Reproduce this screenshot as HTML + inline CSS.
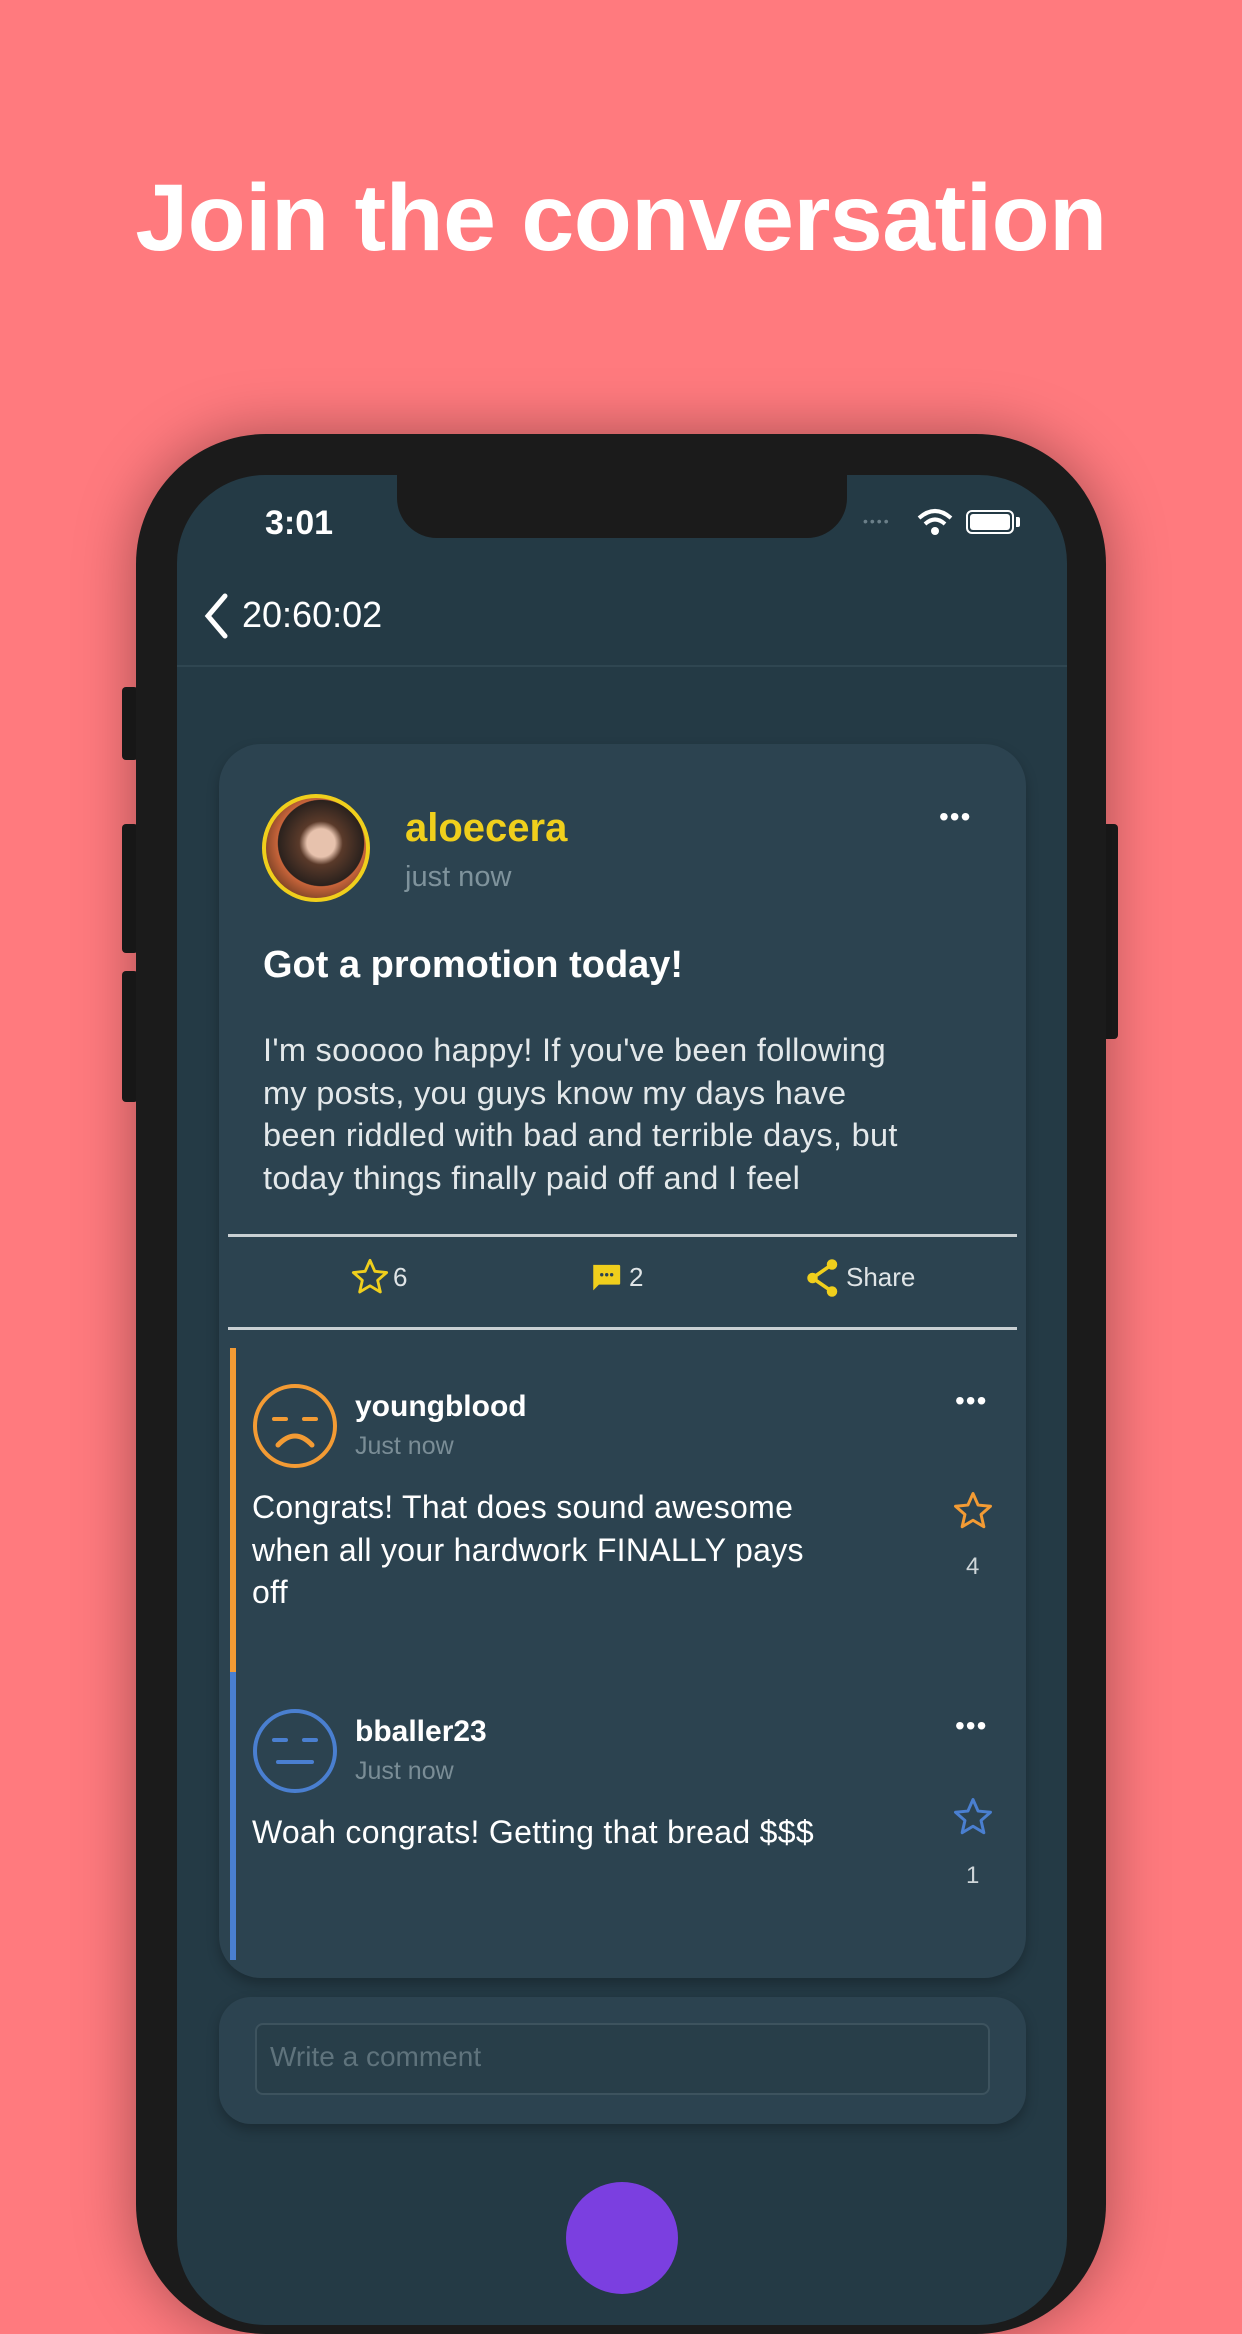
<!DOCTYPE html>
<html><head><meta charset="utf-8"><style>
*{margin:0;padding:0;box-sizing:border-box}
body{width:1242px;height:2208px;overflow:hidden;background:#ff7a7e;font-family:"Liberation Sans",Arial,sans-serif;position:relative}
.a{position:absolute}
.t{white-space:nowrap}
</style></head><body>
<div class="a t" style="left:0;width:1242px;top:158px;text-align:center;font-size:95px;font-weight:bold;color:#fff;line-height:120px;letter-spacing:-0.5px">Join the conversation</div>

<div class="a" style="left:122px;top:687px;width:16px;height:73px;background:#1c1c1c;border-radius:4px"></div>
<div class="a" style="left:122px;top:824px;width:16px;height:129px;background:#1c1c1c;border-radius:4px"></div>
<div class="a" style="left:122px;top:971px;width:16px;height:131px;background:#1c1c1c;border-radius:4px"></div>
<div class="a" style="left:1102px;top:824px;width:16px;height:215px;background:#1c1c1c;border-radius:4px"></div>

<div class="a" style="left:136px;top:434px;width:970px;height:1900px;background:#1b1b1b;border-radius:130px;box-shadow:0 0 60px rgba(0,0,0,0.35)"></div>
<div class="a" style="left:177px;top:475px;width:890px;height:1850px;background:#243a45;border-radius:88px;overflow:hidden">
  <div class="a" style="left:220px;top:-10px;width:450px;height:73px;background:#1b1b1b;border-radius:0 0 40px 40px"></div>
  <div class="a t" style="left:88px;top:28px;font-size:34px;font-weight:bold;color:#fff;line-height:40px">3:01</div>
  <div class="a t" style="left:686px;top:38px;font-size:14px;color:#6b7f89;letter-spacing:2px">••••</div>
  <svg class="a" style="left:740px;top:33px" width="36" height="28" viewBox="0 0 36 28"><path d="M2 10 Q18 -4 34 10" stroke="#fff" stroke-width="4" fill="none"/><path d="M8 16 Q18 7 28 16" stroke="#fff" stroke-width="4" fill="none"/><circle cx="18" cy="23" r="4" fill="#fff"/></svg>
  <div class="a" style="left:789px;top:35px;width:48px;height:24px;border:2px solid #fff;border-radius:6px;padding:2px"><div style="width:100%;height:100%;background:#fff;border-radius:3px"></div></div>
  <div class="a" style="left:839px;top:42px;width:4px;height:10px;background:#fff;border-radius:0 2px 2px 0"></div>
  <svg class="a" style="left:26px;top:118px" width="26" height="46" viewBox="0 0 26 46"><path d="M22 3 L5 23 L22 43" stroke="#fff" stroke-width="5" fill="none" stroke-linecap="round"/></svg>
  <div class="a t" style="left:65px;top:120px;font-size:36px;color:#fff;line-height:40px">20:60:02</div>
  <div class="a" style="left:0;top:190px;width:890px;height:2px;background:#2f4651"></div>

  <div class="a" style="left:42px;top:269px;width:807px;height:1234px;background:#2c4350;border-radius:42px;box-shadow:0 6px 12px rgba(0,0,0,0.25)">
    <div class="a" style="left:43px;top:50px;width:108px;height:108px;border-radius:50%;border:4px solid #f0cf1c;background:radial-gradient(circle at 55% 45%,#e7c2ad 0 18%,#5a3a2a 28%,#2a211d 55%,#c8643a 56%,#6b3b22 80%)"></div>
    <div class="a t" style="left:186px;top:60px;font-size:40px;font-weight:bold;color:#f0cf1c;line-height:48px">aloecera</div>
    <div class="a t" style="left:186px;top:116px;font-size:29px;color:#7f939c;line-height:34px">just now</div>
    <div class="a t" style="left:720px;top:56px;font-size:28px;color:#fff;letter-spacing:1px;line-height:34px">•••</div>
    <div class="a t" style="left:44px;top:198px;font-size:38px;font-weight:bold;color:#fff;line-height:46px">Got a promotion today!</div>
    <div class="a t" style="left:44px;top:285px;font-size:32.5px;color:#e3e8ea;line-height:42.5px;letter-spacing:0.3px">I'm sooooo happy! If you've been following<br>my posts, you guys know my days have<br>been riddled with bad and terrible days, but<br>today things finally paid off and I feel</div>
    <div class="a" style="left:9px;top:490px;width:789px;height:3px;background:#c9d0d3"></div>
    <svg class="a" style="left:131px;top:513px" width="40" height="40" viewBox="0 0 24 24"><path d="M12 2 L14.9 8.6 L22 9.3 L16.6 14 L18.2 21 L12 17.3 L5.8 21 L7.4 14 L2 9.3 L9.1 8.6 Z" fill="none" stroke="#f0cf1c" stroke-width="1.7" stroke-linejoin="round"/></svg>
    <div class="a t" style="left:174px;top:518px;font-size:26px;color:#dfe4e6">6</div>
    <svg class="a" style="left:370px;top:518px" width="34" height="34" viewBox="0 0 24 24"><path d="M3 2 H21 Q22 2 22 3 V15 Q22 16 21 16 H7 L3 20 Z" fill="#f0cf1c"/><circle cx="9" cy="9" r="1.2" fill="#2c4350"/><circle cx="12.5" cy="9" r="1.2" fill="#2c4350"/><circle cx="16" cy="9" r="1.2" fill="#2c4350"/></svg>
    <div class="a t" style="left:410px;top:518px;font-size:26px;color:#dfe4e6">2</div>
    <svg class="a" style="left:586px;top:514px" width="36" height="40" viewBox="0 0 24 26"><path d="M18 4 L5 13 L18 22" stroke="#f0cf1c" stroke-width="2.4" fill="none"/><circle cx="18" cy="4" r="3.5" fill="#f0cf1c"/><circle cx="5" cy="13" r="3.5" fill="#f0cf1c"/><circle cx="18" cy="22" r="3.5" fill="#f0cf1c"/></svg>
    <div class="a t" style="left:627px;top:518px;font-size:26px;color:#dfe4e6">Share</div>
    <div class="a" style="left:9px;top:583px;width:789px;height:3px;background:#c9d0d3"></div>
  </div>

  <div class="a" style="left:53px;top:873px;width:6px;height:324px;background:#f39b34"></div>
  <div class="a" style="left:53px;top:1197px;width:6px;height:288px;background:#4a7fd0"></div>

  <svg class="a" style="left:75px;top:908px" width="86" height="86" viewBox="0 0 86 86"><circle cx="43" cy="43" r="40" fill="none" stroke="#f39b34" stroke-width="4"/><path d="M22 36 h12 M52 36 h12" stroke="#f39b34" stroke-width="4" stroke-linecap="round"/><path d="M26 62 Q43 44 60 62" stroke="#f39b34" stroke-width="5" fill="none" stroke-linecap="round"/></svg>
  <div class="a t" style="left:178px;top:914px;font-size:30px;font-weight:bold;color:#fff;line-height:36px">youngblood</div>
  <div class="a t" style="left:178px;top:956px;font-size:25px;color:#7a8d96;line-height:30px">Just now</div>
  <div class="a t" style="left:778px;top:910px;font-size:28px;color:#fff;letter-spacing:1px">•••</div>
  <div class="a t" style="left:75px;top:1011px;font-size:32px;color:#fff;line-height:42.5px;letter-spacing:0.3px">Congrats! That does sound awesome<br>when all your hardwork FINALLY pays<br>off</div>
  <svg class="a" style="left:775px;top:1015px" width="42" height="42" viewBox="0 0 24 24"><path d="M12 2 L14.9 8.6 L22 9.3 L16.6 14 L18.2 21 L12 17.3 L5.8 21 L7.4 14 L2 9.3 L9.1 8.6 Z" fill="none" stroke="#f39b34" stroke-width="1.7" stroke-linejoin="round"/></svg>
  <div class="a t" style="left:789px;top:1078px;font-size:24px;color:#cfd6d9">4</div>

  <svg class="a" style="left:75px;top:1233px" width="86" height="86" viewBox="0 0 86 86"><circle cx="43" cy="43" r="40" fill="none" stroke="#4a7fd0" stroke-width="4"/><path d="M22 32 h12 M52 32 h12 M26 54 h34" stroke="#4a7fd0" stroke-width="4" stroke-linecap="round"/></svg>
  <div class="a t" style="left:178px;top:1239px;font-size:30px;font-weight:bold;color:#fff;line-height:36px">bballer23</div>
  <div class="a t" style="left:178px;top:1281px;font-size:25px;color:#7a8d96;line-height:30px">Just now</div>
  <div class="a t" style="left:778px;top:1235px;font-size:28px;color:#fff;letter-spacing:1px">•••</div>
  <div class="a t" style="left:75px;top:1336px;font-size:32px;color:#fff;line-height:42.5px;letter-spacing:0.3px">Woah congrats! Getting that bread $$$</div>
  <svg class="a" style="left:775px;top:1321px" width="42" height="42" viewBox="0 0 24 24"><path d="M12 2 L14.9 8.6 L22 9.3 L16.6 14 L18.2 21 L12 17.3 L5.8 21 L7.4 14 L2 9.3 L9.1 8.6 Z" fill="none" stroke="#4a7fd0" stroke-width="1.7" stroke-linejoin="round"/></svg>
  <div class="a t" style="left:789px;top:1387px;font-size:24px;color:#cfd6d9">1</div>

  <div class="a" style="left:42px;top:1522px;width:807px;height:127px;background:#2c4350;border-radius:32px;box-shadow:0 6px 12px rgba(0,0,0,0.25)">
    <div class="a" style="left:36px;top:26px;width:735px;height:72px;border:2px solid #3d535e;border-radius:8px;background:#283e49"></div>
    <div class="a t" style="left:51px;top:44px;font-size:28px;color:#5f737c">Write a comment</div>
  </div>
  <div class="a" style="left:389px;top:1707px;width:112px;height:112px;border-radius:50%;background:#7b3fe0"></div>
</div>
</body></html>
